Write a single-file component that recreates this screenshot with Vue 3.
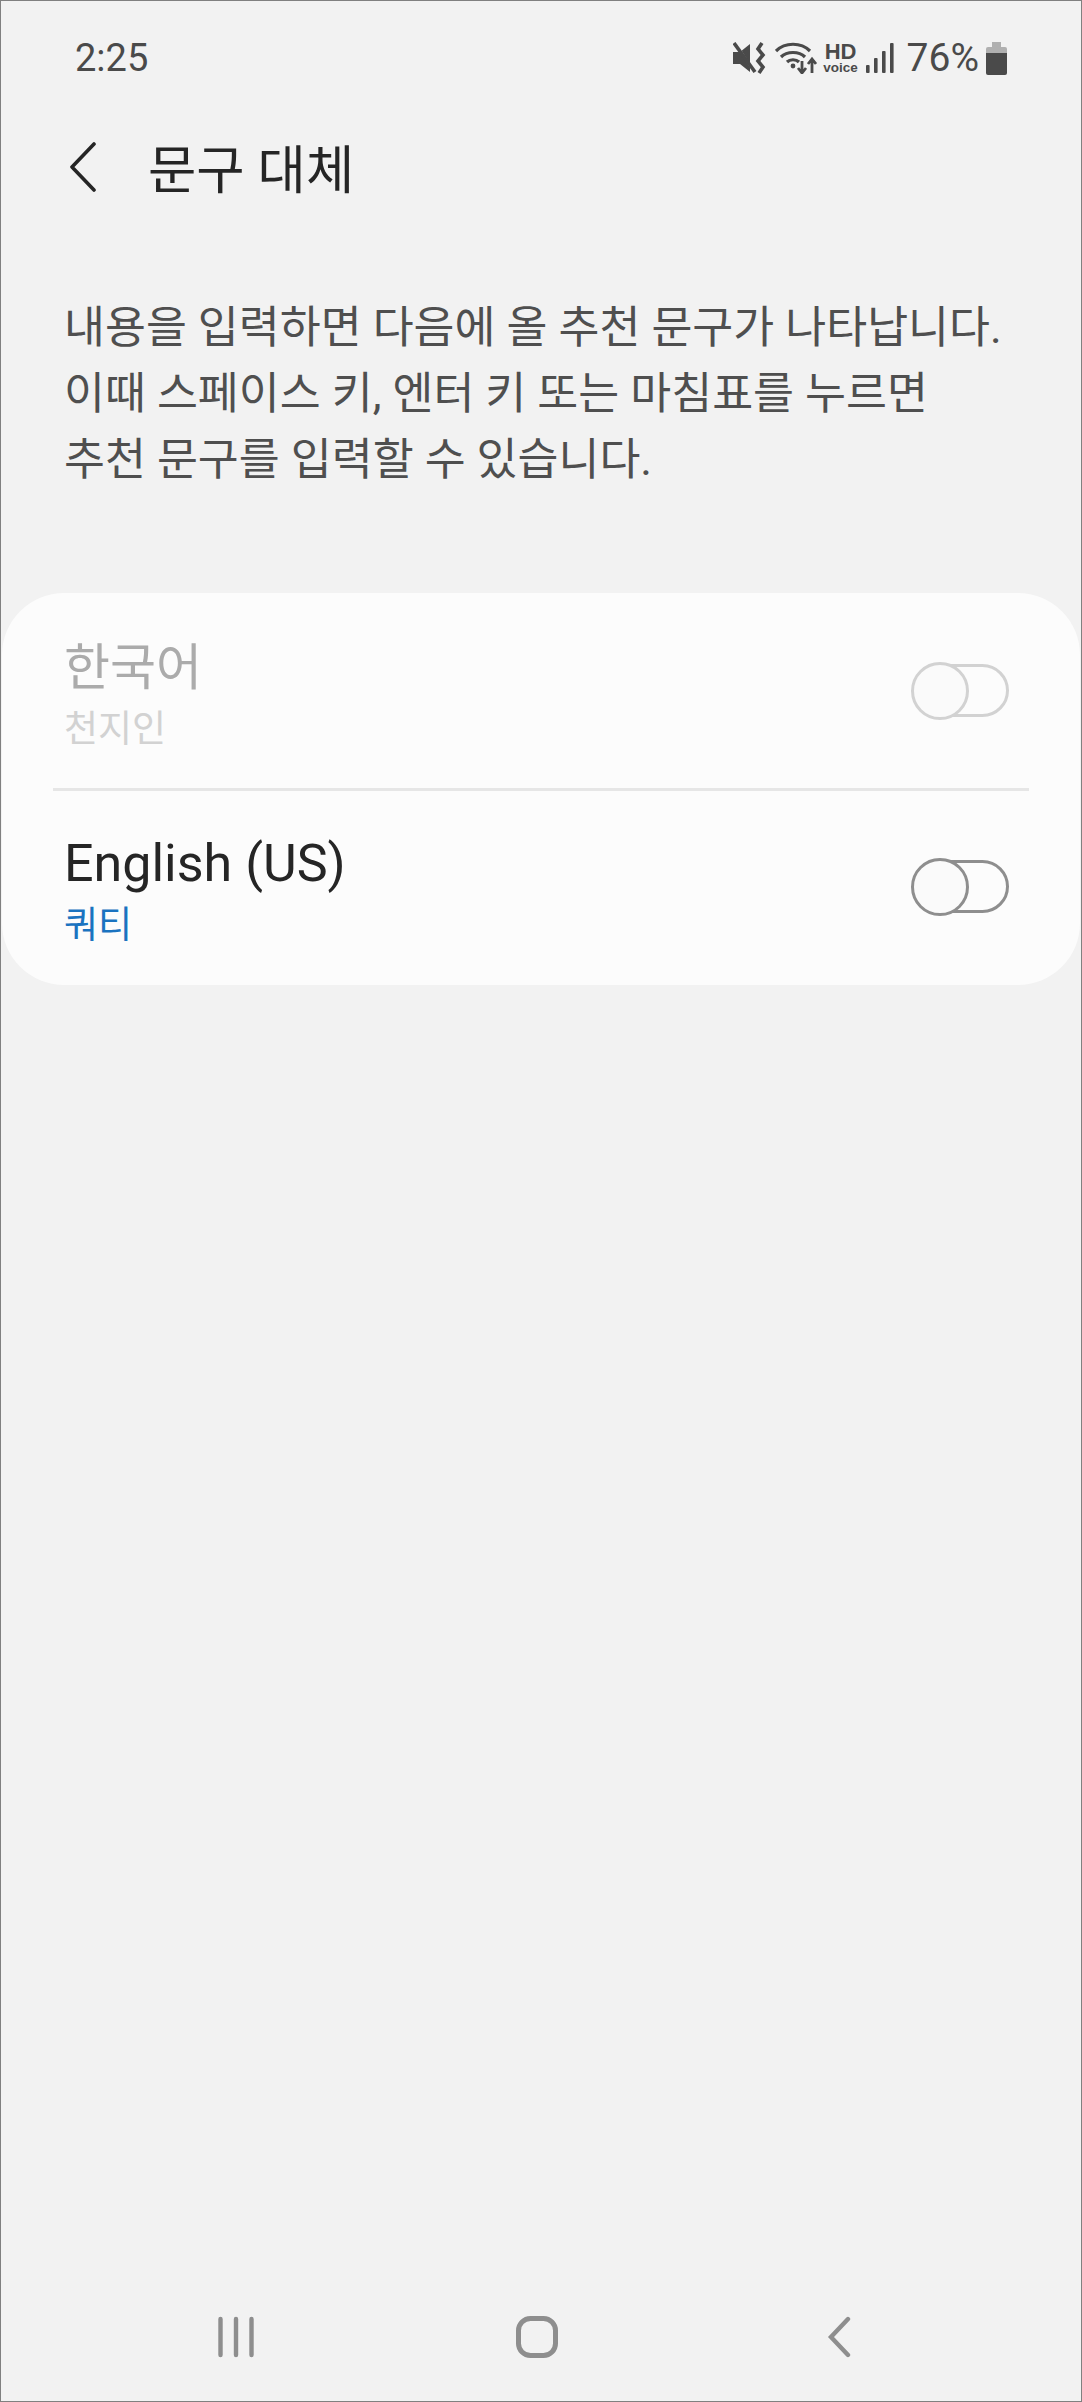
<script setup>
const langs = [
  { name: '한국어', sub: '천지인', disabled: true },
  { name: 'English (US)', sub: '쿼티', disabled: false }
]
</script>

<template>
  <div class="screen">
    <div class="status">
      <span class="time">2:25</span>
      <div class="status-right">
        <svg class="ic-mute" width="34" height="32" viewBox="0 0 34 32">
          <path d="M0 10h7L17 2v28L7 22H0z" fill="#4a4a4a" />
          <path d="M2 0l19 30" stroke="#f2f2f2" stroke-width="2" />
          <path d="M1 1l21 29" stroke="#4a4a4a" stroke-width="3.6" />
          <path d="M29 1l-4 6 5 6-5 6 5 6-4 6" fill="none" stroke="#4a4a4a" stroke-width="3.6" />
        </svg>
        <svg class="ic-wifi" width="42" height="32" viewBox="0 0 42 32">
          <g fill="none" stroke="#4a4a4a" stroke-width="3.2">
            <path d="M1 9c9-9 25-9 34 0" />
            <path d="M6 15c6-6 18-6 24 0" />
            <path d="M12 20c3-3 9-3 12 0" />
          </g>
          <circle cx="18" cy="24" r="2.4" fill="#4a4a4a" />
          <path d="M27 19v12M23 26l4 5 4-5" fill="none" stroke="#4a4a4a" stroke-width="2.8" />
          <path d="M37 31V18M33 22l4-5 4 5" fill="none" stroke="#4a4a4a" stroke-width="2.8" />
        </svg>
        <div class="hd">
          <span class="hd-top">HD</span>
          <span class="hd-sub">voice</span>
        </div>
        <svg class="ic-signal" width="28" height="31" viewBox="0 0 28 31">
          <g fill="#4a4a4a">
            <rect x="0" y="22" width="3.6" height="8" rx="1" />
            <rect x="8" y="15" width="3.6" height="15" rx="1" />
            <rect x="16" y="8" width="3.6" height="22" rx="1" />
            <rect x="24" y="0" width="3.6" height="30" rx="1" />
          </g>
        </svg>
        <span class="pct">76%</span>
        <svg class="ic-batt" width="21" height="33" viewBox="0 0 21 33">
          <path d="M6 0h9v5H6z" fill="#b0b0b0" />
          <path d="M2 5h17a2 2 0 0 1 2 2v4H0V7a2 2 0 0 1 2-2z" fill="#b0b0b0" />
          <path d="M0 11h21v20a2 2 0 0 1-2 2H2a2 2 0 0 1-2-2z" fill="#4a4a4a" />
        </svg>
      </div>
    </div>

    <div class="header">
      <svg class="back" width="26" height="50" viewBox="0 0 26 50">
        <path d="M24 2L2 25l22 23" fill="none" stroke="#252525" stroke-width="3.6" stroke-linecap="round" stroke-linejoin="round" />
      </svg>
      <h1 class="title">문구 대체</h1>
    </div>

    <p class="desc">내용을 입력하면 다음에 올 추천 문구가 나타납니다.<br />이때 스페이스 키, 엔터 키 또는 마침표를 누르면<br />추천 문구를 입력할 수 있습니다.</p>

    <div class="card">
      <div v-for="l in langs" :key="l.name" class="row" :class="{ off: l.disabled }">
        <div class="row-text">
          <div class="row-name">{{ l.name }}</div>
          <div class="row-sub">{{ l.sub }}</div>
        </div>
        <div class="toggle"><div class="knob"></div></div>
      </div>
    </div>

    <div class="spacer"></div>

    <div class="nav">
      <svg width="36" height="42" viewBox="0 0 36 42">
        <g stroke="#8e8e8e" stroke-width="4.4" stroke-linecap="round">
          <path d="M2.5 3v36M18 3v36M33.5 3v36" />
        </g>
      </svg>
      <svg width="42" height="42" viewBox="0 0 42 42">
        <rect x="2.5" y="2.5" width="37" height="37" rx="12" fill="none" stroke="#8e8e8e" stroke-width="5" />
      </svg>
      <svg width="24" height="42" viewBox="0 0 24 42">
        <path d="M21 3L4 21l17 18" fill="none" stroke="#8e8e8e" stroke-width="4.4" stroke-linecap="round" stroke-linejoin="miter" />
      </svg>
    </div>
  </div>
</template>

<style scoped>
.screen {
  box-sizing: border-box;
  width: 1082px;
  height: 2402px;
  border: 1px solid #808080;
  background: #f2f2f2;
  display: flex;
  flex-direction: column;
  font-family: Roboto, "Noto Sans CJK KR", sans-serif;
  overflow: hidden;
}

.status {
  display: flex;
  justify-content: space-between;
  align-items: center;
  height: 56px;
  margin-top: 29px;
  padding: 0 74px 0 74px;
  color: #4a4a4a;
}

.time {
  font-size: 38px;
}

.status-right {
  display: flex;
  align-items: center;
}

.ic-mute {
  margin-right: 8px;
}

.ic-wifi {
  margin-right: 7px;
}

.hd {
  display: flex;
  flex-direction: column;
  align-items: center;
  width: 34px;
  margin-right: 8px;
  font-family: "Liberation Sans", sans-serif;
  line-height: 1;
}

.hd-top {
  font-size: 22px;
  font-weight: 700;
  height: 19px;
  line-height: 19px;
}

.hd-sub {
  font-size: 13.5px;
  font-weight: 700;
  height: 13px;
  line-height: 13px;
}

.ic-signal {
  margin-right: 13px;
}

.pct {
  font-size: 39px;
  margin-right: 7px;
}

.header {
  display: flex;
  align-items: center;
  height: 80px;
  margin-top: 41px;
  padding-left: 69px;
}

.back {
  flex: none;
}

.title {
  margin: 0 0 0 52px;
  padding-bottom: 3px;
  font-size: 52.5px;
  font-weight: 400;
  color: #252525;
}

.desc {
  margin: 88px 0 0;
  padding-left: 63px;
  font-size: 44.5px;
  line-height: 66px;
  color: #4f4f4f;
  white-space: nowrap;
}

.card {
  margin: 100px 1px 0 1px;
  background: #fcfcfc;
  border-radius: 62px;
  height: 392px;
  display: flex;
  flex-direction: column;
}

.row {
  position: relative;
  flex: 1;
  display: flex;
  align-items: center;
  justify-content: space-between;
  padding: 0 71px 0 62px;
}

.row + .row::before {
  content: "";
  position: absolute;
  top: -1px;
  left: 51px;
  right: 51px;
  height: 3px;
  background: #e6e6e6;
}

.row-name {
  font-size: 52px;
  line-height: 60px;
  color: #252525;
}

.row-sub {
  font-size: 37px;
  line-height: 44px;
  margin-top: 10px;
  color: #1a73c0;
}

.row-text {
  padding-top: 7px;
}

.off .row-name {
  font-size: 50px;
  color: #ababab;
}

.off .row-sub {
  color: #d2d2d2;
}

.toggle {
  position: relative;
  box-sizing: border-box;
  width: 97px;
  height: 53px;
  margin-bottom: 2px;
  border: 3px solid #8e8e8e;
  border-radius: 27px;
}

.knob {
  position: absolute;
  left: -4px;
  top: -5px;
  box-sizing: border-box;
  width: 58px;
  height: 58px;
  border: 3px solid #8e8e8e;
  border-radius: 50%;
  background: #fafafa;
}

.off .toggle,
.off .knob {
  border-color: #d2d2d2;
}

.spacer {
  flex: 1;
}

.nav {
  display: flex;
  align-items: center;
  height: 42px;
  margin-bottom: 43px;
  padding-left: 217px;
}

.nav svg:nth-child(2) {
  margin-left: 262px;
}

.nav svg:nth-child(3) {
  margin-left: 269px;
}
</style>

<style>
html, body {
  margin: 0;
  background: #f2f2f2;
}
</style>
